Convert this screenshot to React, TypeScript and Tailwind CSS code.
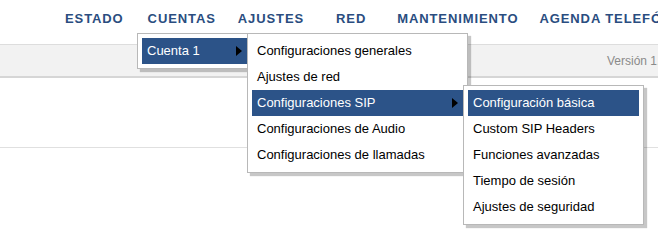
const NAV = [
  { label: "ESTADO", ml: "ml-[65px]" },
  { label: "CUENTAS", ml: "ml-[24px]" },
  { label: "AJUSTES", ml: "ml-[22px]" },
  { label: "RED", ml: "ml-[32px]" },
  { label: "MANTENIMIENTO", ml: "ml-[31px]" },
  { label: "AGENDA TELEFÓNICA", ml: "ml-[21px]" },
];

type Item = { label: string; active?: boolean; sub?: boolean };

const MENU_1: Item[] = [{ label: "Cuenta 1", active: true, sub: true }];

const MENU_2: Item[] = [
  { label: "Configuraciones generales" },
  { label: "Ajustes de red" },
  { label: "Configuraciones SIP", active: true, sub: true },
  { label: "Configuraciones de Audio" },
  { label: "Configuraciones de llamadas" },
];

const MENU_3: Item[] = [
  { label: "Configuración básica", active: true },
  { label: "Custom SIP Headers" },
  { label: "Funciones avanzadas" },
  { label: "Tiempo de sesión" },
  { label: "Ajustes de seguridad" },
];

function Arrow() {
  return (
    <svg width="6" height="10" viewBox="0 0 6 10" className="ml-auto">
      <path d="M0 0 L6 5 L0 10 Z" fill="#000" />
    </svg>
  );
}

function Menu({ items, width, className }: { items: Item[]; width: string; className: string }) {
  return (
    <div
      className={`absolute ${className} ${width} border border-[#b8b8b8] bg-white p-[4px] shadow-[3px_3px_1px_rgba(0,0,0,0.22)]`}
    >
      {items.map((it) => (
        <div
          key={it.label}
          className={`flex h-[26px] items-center whitespace-nowrap pl-[5px] pr-[5px] text-[13px] ${
            it.active ? "bg-[#2c5388] text-white" : "text-black"
          }`}
        >
          <span>{it.label}</span>
          {it.sub && <Arrow />}
        </div>
      ))}
    </div>
  );
}

export default function App() {
  return (
    <div className="relative h-[247px] w-full overflow-hidden bg-white font-['Liberation_Sans',Arial,sans-serif]">
      <div className="flex h-[44px] items-start whitespace-nowrap pt-[9px]">
        {NAV.map((n) => (
          <span
            key={n.label}
            className={`${n.ml} text-[13px] font-bold tracking-[0.9px] text-[#2a4d80]`}
          >
            {n.label}
          </span>
        ))}
      </div>

      <div className="flex h-[34px] items-end border-t border-b-2 border-t-[#dddddd] border-b-[#d6d6d6] bg-[#f2f2f2] pb-[6px]">
        <span className="ml-[607px] whitespace-nowrap text-[12px] text-[#8a8a8a]">Versión 1.0.4.52</span>
      </div>

      <div className="h-[70px] border-b border-[#e0e0e0]" />

      <Menu items={MENU_1} width="w-[115px]" className="left-[137px] top-[33px]" />
      <Menu items={MENU_2} width="w-[221px]" className="left-[247px] top-[33px]" />
      <Menu items={MENU_3} width="w-[181px]" className="left-[463px] top-[85px]" />
    </div>
  );
}
